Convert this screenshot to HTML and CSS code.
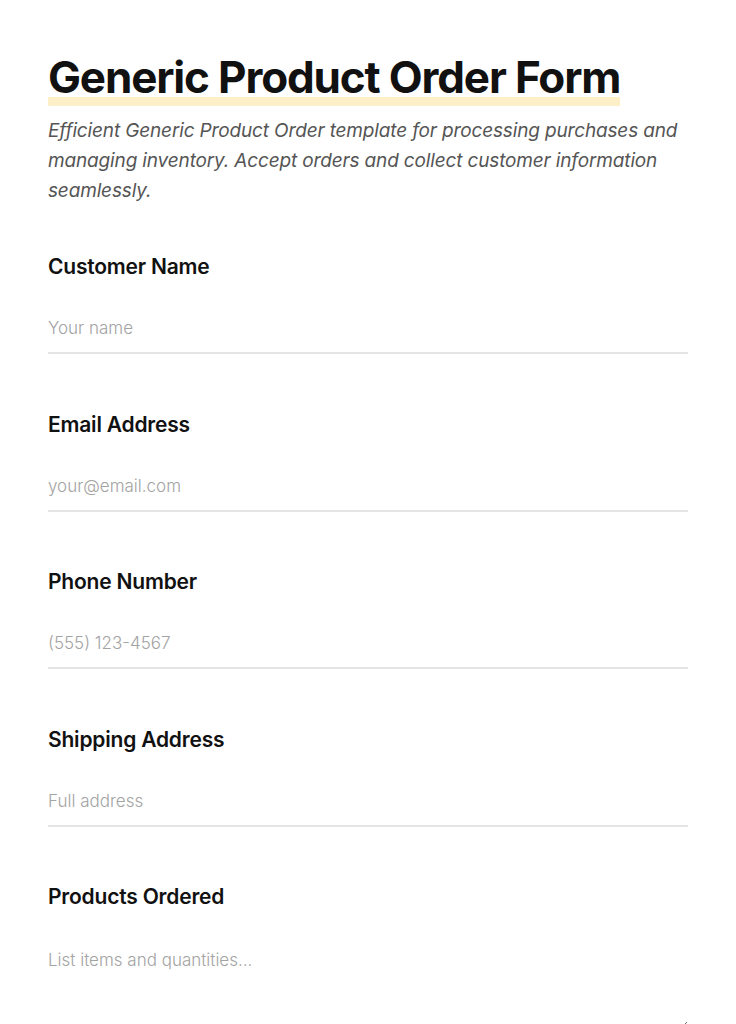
FILE: index.html
```html
<!DOCTYPE html>
<html lang="en">
<head>
<meta charset="utf-8">
<title>Generic Product Order Form</title>
<link rel="stylesheet" href="styles.css">
</head>
<body>
<main class="page">
  <header class="intro">
    <h1 class="title"><span class="title-mark">Generic Product Order Form</span></h1>
    <p class="lead">Efficient Generic Product Order template for processing purchases and managing inventory. Accept orders and collect customer information seamlessly.</p>
  </header>
  <form class="form">
    <div class="field">
      <label class="label" for="name">Customer Name</label>
      <input class="input" id="name" type="text" placeholder="Your name">
    </div>
    <div class="field">
      <label class="label" for="email">Email Address</label>
      <input class="input" id="email" type="email" placeholder="your@email.com">
    </div>
    <div class="field">
      <label class="label" for="phone">Phone Number</label>
      <input class="input" id="phone" type="tel" placeholder="(555) 123-4567">
    </div>
    <div class="field">
      <label class="label" for="address">Shipping Address</label>
      <input class="input" id="address" type="text" placeholder="Full address">
    </div>
    <div class="field">
      <label class="label" for="products">Products Ordered</label>
      <textarea class="input textarea" id="products" rows="3" placeholder="List items and quantities..."></textarea>
    </div>
  </form>
</main>
</body>
</html>
```
FILE: styles.css
```css
* { box-sizing: border-box; }
html, body { margin: 0; background: #ffffff; }
body {
  font-family: Inter, "Noto Sans", sans-serif;
  color: #111111;
}
.page {
  padding: 52px 48px 40px;
}
.intro { margin-bottom: 47px; }
.title {
  margin: 0;
  font-size: 44px;
  line-height: 50px;
  font-weight: 700;
  letter-spacing: -1.15px;
}
.title-mark {
  display: inline-block;
  padding-bottom: 4px;
  background: linear-gradient(#fdf0c9, #fdf0c9) left bottom / 100% 9px no-repeat;
}
.lead {
  margin: 10px 0 0;
  font-size: 19px;
  line-height: 30px;
  font-style: italic;
  color: #555555;
  letter-spacing: -0.15px;
}
.form {
  display: flex;
  flex-direction: column;
  gap: 56.5px;
}
.field {
  display: flex;
  flex-direction: column;
  gap: 21px;
}
.label {
  font-size: 21px;
  line-height: 28px;
  font-weight: 600;
  letter-spacing: -0.2px;
  color: #111111;
}
.input {
  display: block;
  width: 100%;
  border: none;
  border-bottom: 2px solid #e5e5e5;
  padding: 14px 0 12px;
  font-family: inherit;
  font-size: 17px;
  line-height: 24px;
  font-weight: 300;
  color: #111111;
  background: transparent;
  outline: none;
}
.input::placeholder { color: #a3a3a3; }
.textarea {
  height: 100px;
  padding-top: 16px;
  resize: vertical;
}
```
